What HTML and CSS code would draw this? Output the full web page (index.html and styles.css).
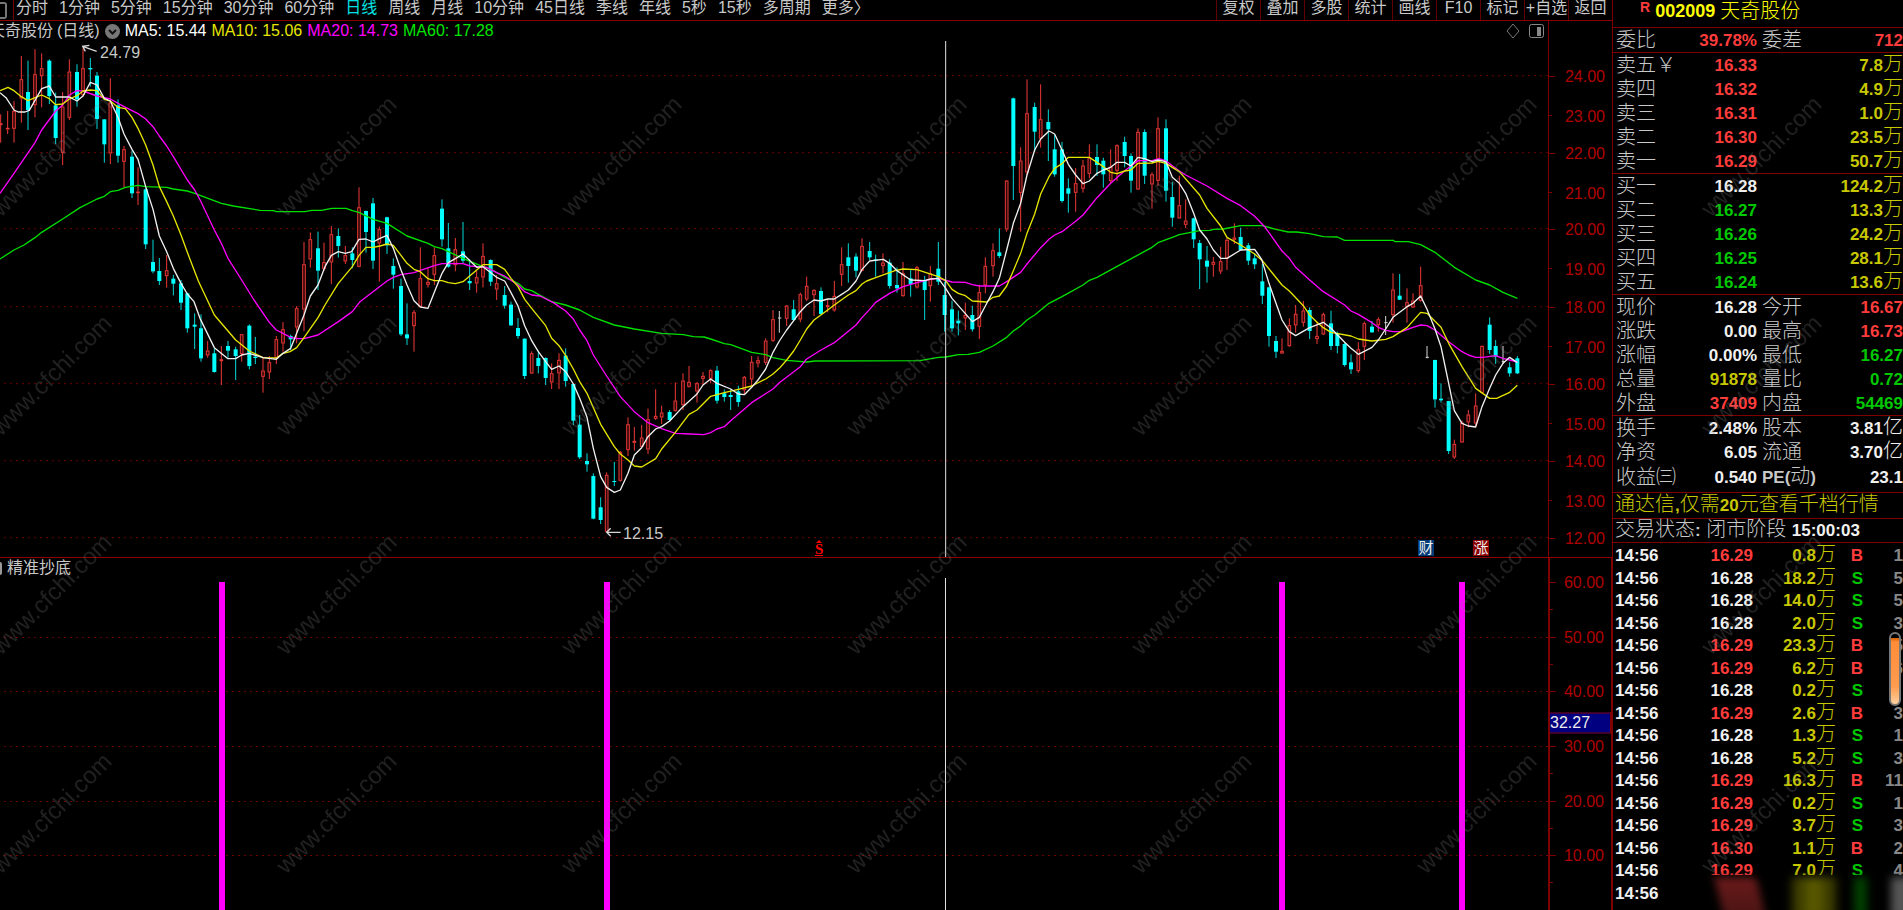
FILE: index.html
```html
<!DOCTYPE html>
<html lang="zh-CN">
<head>
<meta charset="utf-8">
<title>天奇股份 002009</title>
<link rel="stylesheet" href="styles.css">
</head>
<body>
<div class="app">
  <main class="charts">
    <nav class="toolbar">
      <button class="tool-toggle" aria-label="面板"></button>
      <div class="periods">
        <button>分时</button><button>1分钟</button><button>5分钟</button><button>15分钟</button><button>30分钟</button><button>60分钟</button><button class="active">日线</button><button>周线</button><button>月线</button><button>10分钟</button><button>45日线</button><button>季线</button><button>年线</button><button>5秒</button><button>15秒</button><button>多周期</button><button>更多〉</button>
      </div>
      <div class="actions">
        <button>复权</button><button>叠加</button><button>多股</button><button>统计</button><button>画线</button><button>F10</button><button>标记</button><button>+自选</button><button>返回</button>
      </div>
    </nav>

    <header class="chart-head price-head">
      <h1 class="chart-name">天奇股份<span class="period">(日线)</span></h1>
      <svg class="fold" viewBox="0 0 15 15" aria-hidden="true"><circle cx="7.500" cy="7.500" r="7.500" fill="#777"/><path d="M4 6l3.500 3.500L11 6" fill="none" stroke="#111" stroke-width="2"/></svg>
      <span class="ma5">MA5: 15.44</span>
      <span class="ma10">MA10: 15.06</span>
      <span class="ma20">MA20: 14.73</span>
      <span class="ma60">MA60: 17.28</span>
      <svg class="head-icons" viewBox="0 0 40 16" aria-hidden="true"><path d="M8 1l6 7-6 7-6-7z" fill="none" stroke="#777"/><rect x="24.500" y="1.500" width="14" height="13" rx="2" fill="none" stroke="#888"/><rect x="32" y="4" width="4" height="9" fill="#888"/></svg>
    </header>
    <div class="axis-cap"></div>
    <section class="plot" id="price-plot"></section>
    <div class="axis" id="price-axis"></div>

    <div class="split"></div>
    <header class="chart-head signal-head"><i class="ring"></i>精准抄底</header>
    <div class="axis-cap boxed"></div>
    <section class="plot" id="signal-plot"></section>
    <div class="axis boxed" id="signal-axis"></div>
  </main>

  <aside class="quote">
    <header class="stock"><sup class="red">R</sup><b>002009</b><span>天奇股份</span></header>
    <table class="rows info">
      <tr><th>委比</th><td class="red">39.78%</td><th>委差</th><td class="red">712</td></tr>
    </table>
    <table class="rows book">
      <tr><th>卖五￥</th><td class="red">16.33</td><td class="vol">7.8<i>万</i></td></tr>
      <tr><th>卖四</th><td class="red">16.32</td><td class="vol">4.9<i>万</i></td></tr>
      <tr><th>卖三</th><td class="red">16.31</td><td class="vol">1.0<i>万</i></td></tr>
      <tr><th>卖二</th><td class="red">16.30</td><td class="vol">23.5<i>万</i></td></tr>
      <tr><th>卖一</th><td class="red">16.29</td><td class="vol">50.7<i>万</i></td></tr>
    </table>
    <table class="rows book">
      <tr><th>买一</th><td>16.28</td><td class="vol">124.2<i>万</i></td></tr>
      <tr><th>买二</th><td class="green">16.27</td><td class="vol">13.3<i>万</i></td></tr>
      <tr><th>买三</th><td class="green">16.26</td><td class="vol">24.2<i>万</i></td></tr>
      <tr><th>买四</th><td class="green">16.25</td><td class="vol">28.1<i>万</i></td></tr>
      <tr><th>买五</th><td class="green">16.24</td><td class="vol">13.6<i>万</i></td></tr>
    </table>
    <table class="rows info">
      <tr><th>现价</th><td>16.28</td><th>今开</th><td class="red">16.67</td></tr>
      <tr><th>涨跌</th><td>0.00</td><th>最高</th><td class="red">16.73</td></tr>
      <tr><th>涨幅</th><td>0.00%</td><th>最低</th><td class="green">16.27</td></tr>
      <tr><th>总量</th><td class="vol">91878</td><th>量比</th><td class="green">0.72</td></tr>
      <tr><th>外盘</th><td class="red">37409</td><th>内盘</th><td class="green">54469</td></tr>
    </table>
    <table class="rows info basics">
      <tr><th>换手</th><td>2.48%</td><th>股本</th><td>3.81<i>亿</i></td></tr>
      <tr><th>净资</th><td>6.05</td><th>流通</th><td>3.70<i>亿</i></td></tr>
      <tr><th>收益㈢</th><td>0.540</td><th><b>PE(</b>动<b>)</b></th><td>23.1</td></tr>
    </table>
    <a class="promo" href="#">通达信<b>,</b>仅需<b>20</b>元查看千档行情</a>
    <p class="status">交易状态<b>:</b> 闭市阶段 <b>15:00:03</b></p>
    <div class="ticks">
      <table>
        <tr><td>14:56</td><td class="red">16.29</td><td class="vol">0.8<i>万</i></td><td class="red">B</td><td>1</td></tr>
        <tr><td>14:56</td><td>16.28</td><td class="vol">18.2<i>万</i></td><td class="green">S</td><td>5</td></tr>
        <tr><td>14:56</td><td>16.28</td><td class="vol">14.0<i>万</i></td><td class="green">S</td><td>5</td></tr>
        <tr><td>14:56</td><td>16.28</td><td class="vol">2.0<i>万</i></td><td class="green">S</td><td>3</td></tr>
        <tr><td>14:56</td><td class="red">16.29</td><td class="vol">23.3<i>万</i></td><td class="red">B</td><td>5</td></tr>
        <tr><td>14:56</td><td class="red">16.29</td><td class="vol">6.2<i>万</i></td><td class="red">B</td><td>6</td></tr>
        <tr><td>14:56</td><td>16.28</td><td class="vol">0.2<i>万</i></td><td class="green">S</td><td></td></tr>
        <tr><td>14:56</td><td class="red">16.29</td><td class="vol">2.6<i>万</i></td><td class="red">B</td><td>3</td></tr>
        <tr><td>14:56</td><td>16.28</td><td class="vol">1.3<i>万</i></td><td class="green">S</td><td>1</td></tr>
        <tr><td>14:56</td><td>16.28</td><td class="vol">5.2<i>万</i></td><td class="green">S</td><td>3</td></tr>
        <tr><td>14:56</td><td class="red">16.29</td><td class="vol">16.3<i>万</i></td><td class="red">B</td><td>11</td></tr>
        <tr><td>14:56</td><td class="red">16.29</td><td class="vol">0.2<i>万</i></td><td class="green">S</td><td>1</td></tr>
        <tr><td>14:56</td><td class="red">16.29</td><td class="vol">3.7<i>万</i></td><td class="green">S</td><td>3</td></tr>
        <tr><td>14:56</td><td class="red">16.30</td><td class="vol">1.1<i>万</i></td><td class="red">B</td><td>2</td></tr>
        <tr><td>14:56</td><td class="red">16.29</td><td class="vol">7.0<i>万</i></td><td class="green">S</td><td>4</td></tr>
        <tr><td>14:56</td><td></td><td></td><td></td><td></td></tr>
        <tr><td>14:57</td><td></td><td></td><td></td><td></td></tr>
      </table>
      <div class="fade"><i class="smear s-red"></i><i class="smear s-vol"></i><i class="smear s-green"></i><i class="smear s-gray"></i></div>
      <div class="thumb"></div>
    </div>
  </aside>

  <svg class="watermark" aria-hidden="true">
    <defs><pattern id="wm" x="-14" y="77" width="285" height="219" patternUnits="userSpaceOnUse"><text x="0" y="0" transform="translate(15 141) rotate(-45)">www.cfchi.com</text></pattern></defs>
    <rect width="100%" height="100%" fill="url(#wm)"/>
  </svg>
</div>
<script src="chart.js"></script>
</body>
</html>
```
FILE: styles.css
```css
* { box-sizing: border-box; }
body {
  margin: 0;
  background: #000;
  color: #c8c8c8;
  font-family: "Liberation Sans", "Noto Sans CJK SC", sans-serif;
  font-size: 16px;
  line-height: 20px;
  overflow: hidden;
}
button {
  margin: 0;
  padding: 0;
  border: 0;
  background: none;
  color: inherit;
  font: inherit;
  white-space: nowrap;
}
i { font-style: normal; }
.app {
  position: relative;
  display: grid;
  grid-template-columns: minmax(0, 1fr) 291px;
  height: 100vh;
  overflow: hidden;
}
.charts {
  display: grid;
  grid-template-columns: minmax(0, 1fr) 64px;
  grid-template-rows: 21px 20px minmax(0, 516fr) 1px 20px minmax(0, 332fr);
  min-height: 0;
}

/* toolbar */
.toolbar {
  grid-column: 1 / -1;
  display: flex;
  border-bottom: 1px solid #900000;
  line-height: 16px;
}
.tool-toggle {
  width: 14px;
  border-right: 1px solid #700000;
}
.tool-toggle::before {
  content: "";
  display: block;
  width: 5px;
  height: 13px;
  border: 2px solid #777;
  border-left: 0;
  border-radius: 0 3px 3px 0;
}
.periods {
  flex: 1;
  display: flex;
  align-items: flex-start;
  gap: 11px;
  padding-left: 2px;
}
.periods .active { color: #00e0e0; }
.actions { display: flex; }
.actions button {
  width: 44px;
  padding-bottom: 4px;
  border-left: 1px solid #600000;
}

/* chart headings */
.chart-head {
  display: flex;
  align-items: center;
  gap: 5px;
  white-space: nowrap;
}
.chart-name {
  margin: 0 0 0 -11px;
  font-size: 16px;
  font-weight: 400;
}
.period { margin-left: 4px; }
.fold { width: 15px; height: 15px; }
.ma5 { color: #fff; }
.ma10 { color: #e6e600; }
.ma20 { color: #f0f; }
.ma60 { color: #00e600; }
.head-icons {
  width: 40px;
  height: 16px;
  margin-left: auto;
  margin-right: 3px;
}
.ring {
  width: 2px;
  height: 13px;
  border-right: 2px solid #999;
  border-radius: 0 8px 8px 0;
}
.split {
  grid-column: 1 / -1;
  background: #900000;
}

/* plots */
.plot {
  position: relative;
  min-height: 0;
  overflow: hidden;
}
.plot svg {
  display: block;
  width: 100%;
  height: 100%;
}
.grid { stroke: #6a0000; stroke-width: 1; stroke-dasharray: 2 4; }
.up { stroke: #f03838; fill: none; }
.up-body { fill: #300808; stroke: #e83636; stroke-width: 3; }
.down { stroke: #00d8d8; }
.down-body { fill: #0ff; }
.flat { stroke: #d8d8d8; }
.wick { stroke-width: 3; }
.ma { fill: none; stroke-width: 4; stroke-linejoin: round; }
.ma-5 { stroke: #f0f0f0; }
.ma-10 { stroke: #e6e600; }
.ma-20 { stroke: #f0f; }
.ma-60 { stroke: #00e000; }
.pointer { fill: none; stroke: #d8d8d8; stroke-width: 4; }
.cross { stroke: #e0e0e0; stroke-width: 1; }
.signal { fill: #f0f; }
.note {
  position: absolute;
  transform: translateY(-50%);
  line-height: 18px;
}
.mark {
  position: absolute;
  bottom: 1px;
  width: 16px;
  height: 16px;
  color: #eee;
  font-size: 15px;
  line-height: 16px;
  text-align: center;
}
.mark-fin { background: #003a78; }
.mark-rise { background: #8c0000; }
.mark-event {
  color: #f00;
  font: bold 15px/18px "Liberation Serif", serif;
  border-bottom: 1px solid #f00;
  width: 8px;
}
.mark-event::before {
  content: "";
  position: absolute;
  left: 1px;
  top: 0;
  border: 3px solid transparent;
  border-top: 0;
  border-bottom-color: #f00;
}

/* axes */
.axis, .axis-cap { border-left: 1px solid #800000; }
.boxed { border-right: 1px solid #800000; border-left-width: 2px; }
.axis {
  position: relative;
  color: #b00000;
}
.tick {
  position: absolute;
  left: 0;
  width: 3px;
  height: 1px;
  background: #800000;
}
.tick.major { width: 6px; }
.axis-label {
  position: absolute;
  right: 7px;
  transform: translateY(-50%);
}
.axis-value {
  position: absolute;
  left: 0;
  right: 0;
  height: 21px;
  transform: translateY(-50%);
  border: 1px solid #800000;
  border-left: 0;
  background: #000080;
  color: #eee;
  line-height: 18px;
}

/* quote panel */
.quote {
  display: flex;
  flex-direction: column;
  min-height: 0;
  border-left: 1px solid #800000;
  overflow: hidden;
  font-weight: 300;
  font-size: 20px;
}
.quote b { font-weight: 700; }
.red { color: #ff3c3c; }
.green { color: #00c800; }
.stock {
  display: flex;
  flex: none;
  align-items: center;
  height: 27px;
  padding: 0 0 5px 27px;
  color: #ff0;
  line-height: 20px;
}
.stock sup {
  align-self: flex-start;
  margin-right: 5px;
  font-size: 14px;
  font-weight: 700;
  line-height: 14px;
}
.stock b { margin-right: 5px; font-size: 18px; }
.rows {
  flex: none;
  width: 100%;
  border-collapse: separate;
  border-spacing: 0;
  border-top: 1px solid #800000;
  table-layout: fixed;
}
.rows tr { height: 24px; }
.rows th, .rows td {
  padding: 1px 0 0;
  white-space: nowrap;
  line-height: 23px;
}
.rows th {
  width: 60px;
  padding-left: 3px;
  font-weight: 300;
  text-align: left;
}
.rows td {
  color: #f0f0f0;
  font-size: 17px;
  font-weight: 700;
  text-align: right;
}
.rows i, .ticks i {
  font-size: 20px;
  font-weight: 300;
  line-height: 0;
}
.rows b { font-size: 17px; }
.info td:nth-child(2) { width: 84px; }
.info th:nth-child(3) { padding-left: 5px; }
.book td:nth-child(2) { width: 84px; }
.rows .red, .ticks .red { color: #ff3c3c; }
.rows .green, .ticks .green { color: #00c800; }
.rows .vol, .ticks .vol { color: #c8c800; }
.basics { padding-bottom: 3px; }
.promo, .status {
  flex: none;
  margin: 0;
  padding-left: 2px;
  border-top: 1px solid #800000;
  line-height: 23px;
  height: 26px;
  white-space: nowrap;
}
.promo { color: #c8c800; text-decoration: none; }
.promo b, .status b { font-size: 17px; }
.status { height: 24px; line-height: 21px; }
.status b:last-child { color: #f0f0f0; }
.ticks {
  position: relative;
  flex: 1;
  min-height: 0;
  padding-top: 2px;
  border-top: 1px solid #800000;
  overflow: hidden;
}
.ticks table {
  width: 100%;
  height: 383px;
  border-collapse: collapse;
  table-layout: fixed;
}
.ticks td {
  padding: 0;
  color: #f0f0f0;
  font-size: 17px;
  font-weight: 700;
  line-height: 20px;
  text-align: right;
  white-space: nowrap;
}
.ticks td:nth-child(1) { width: 70px; padding-left: 2px; text-align: left; }
.ticks td:nth-child(2) { width: 70px; }
.ticks td:nth-child(3) { width: 83px; }
.ticks td:nth-child(4) { width: 27px; }
.ticks td:nth-child(5) { color: #888; }
.fade {
  position: absolute;
  left: 88px;
  right: 0;
  bottom: 0;
  height: 35px;
  background: #000;
}
.ticks .smear {
  position: absolute;
  top: 2px;
  bottom: -8px;
  filter: blur(4px);
}
.s-red { left: 18px; width: 42px; background: linear-gradient(#6a1a1a, #4a1414); transform: skewX(14deg); }
.s-vol { left: 90px; width: 46px; background: linear-gradient(90deg, #2a2a00, #5e5e00, #2a2a00); }
.s-green { left: 153px; width: 13px; background: #004000; }
.s-gray { left: 190px; width: 20px; background: #555; }
.thumb {
  position: absolute;
  top: 89px;
  right: 2px;
  width: 12px;
  height: 74px;
  border: 2px solid #777;
  border-radius: 6px;
  background: linear-gradient(#000 4px, #d86000 4px, #ff8c38 8px, #ff9c50 75%, #ffd0a0);
}

.watermark {
  position: absolute;
  inset: 0;
  width: 100%;
  height: 100%;
  pointer-events: none;
}
.watermark text {
  fill: #808080;
  fill-opacity: 0.25;
  font: 24px "Liberation Sans", sans-serif;
}
```
FILE: chart.js
```js
// Candle rows: kind, x, high, body top, body bottom, low (plot units, three per pixel at base size).
const candles = `
r 2 343 370 375 428;r 23 333 384 388 402;r 42 303 333 386 428;r 64 168 238 295 368;c 84 182 276 330 390;r 105 148 223 315 352
r 125 160 205 228 322;c 148 178 182 288 312;c 167 278 316 414 432;r 188 276 320 458 495;r 208 178 215 353 360;c 231 193 216 298 320
r 249 145 205 285 290;c 271 174 204 208 260;c 291 216 227 357 387;c 313 358 358 433 488;r 331 235 308 460 492;c 354 298 316 467 488
r 372 438 448 485 562;c 396 452 470 580 594;r 414 502 575 579 615;c 437 565 568 733 747;c 459 719 786 814 820;c 478 774 813 843 855
r 500 765 811 828 863;c 520 825 836 851 886;c 543 840 850 908 930;c 562 878 880 985 998;c 584 940 974 980 1047;c 603 943 985 1075 1085
r 623 1023 1052 1066 1073;c 643 1045 1060 1116 1118;r 664 1038 1078 1083 1155;c 684 1023 1038 1052 1073;c 707 1040 1048 1068 1140
r 725 1002 1003 1062 1085;c 748 973 977 1098 1108;c 766 1011 1070 1074 1092;r 789 1072 1112 1130 1178;r 808 1068 1087 1117 1137
r 829 1008 1018 1075 1092;r 849 966 988 1030 1055;c 872 1004 1008 1018 1050;r 890 918 925 982 1030;r 912 726 793 928 993
r 931 697 718 778 803;c 954 695 745 812 870;r 972 728 787 806 812;r 994 678 703 787 852;c 1015 685 708 738 773;r 1036 738 766 784 792
c 1057 742 760 780 805;r 1077 562 622 800 802;c 1098 632 633 696 758;c 1119 594 610 782 807;r 1138 680 688 730 845;c 1161 650 652 736 762
c 1180 775 798 824 866;c 1203 836 858 1003 1008;c 1221 910 1003 1015 1035;r 1242 930 937 978 1055;r 1261 742 835 920 922
r 1284 805 846 854 863;r 1303 742 766 824 855;c 1326 598 626 718 740;c 1345 669 745 800 803;r 1366 714 748 795 814;c 1389 666 754 782 790
c 1409 778 843 850 870;r 1430 812 832 850 878;r 1449 730 768 832 862;c 1472 778 780 845 858;r 1490 825 850 868 900;c 1514 858 885 917 926
c 1533 905 914 976 978;c 1554 954 984 1008 1016;c 1574 1015 1016 1128 1137;r 1595 1054 1060 1120 1122;c 1615 1052 1074 1098 1120
c 1637 1072 1074 1134 1155;r 1655 1090 1120 1147 1167;r 1677 1060 1080 1120 1167;c 1697 1045 1067 1143 1160;c 1720 1150 1152 1262 1275
c 1739 1245 1274 1372 1377;c 1761 1360 1383 1393 1415;c 1780 1420 1428 1556 1558;c 1802 1492 1522 1560 1572;r 1820 1417 1425 1595 1597
c 1843 1386 1443 1446 1458;r 1861 1353 1356 1442 1445;r 1884 1252 1273 1350 1368;r 1903 1281 1323 1328 1352;r 1925 1275 1313 1340 1343
r 1944 1226 1258 1348 1362;r 1967 1168 1248 1256 1260;r 1985 1217 1238 1252 1272;c 2009 1230 1236 1260 1265;r 2026 1147 1202 1232 1235
r 2049 1120 1142 1215 1230;r 2067 1098 1146 1160 1163;r 2091 1146 1150 1174 1208;r 2109 1116 1128 1136 1155;r 2132 1108 1111 1136 1150
c 2151 1098 1112 1202 1211;c 2173 1168 1180 1191 1205;c 2192 1168 1185 1191 1230;c 2215 1157 1174 1206 1220;r 2233 1128 1131 1170 1185
r 2255 1068 1086 1138 1158;r 2274 1069 1081 1090 1102;r 2297 1015 1022 1088 1095;r 2319 930 958 1022 1026;w 2338 933 953 956 998
r 2360 915 917 956 978;c 2381 900 928 960 964;r 2401 878 883 958 967;r 2420 830 858 898 903;r 2442 868 870 885 948;c 2463 862 873 942 944
r 2483 900 916 921 937;r 2503 843 888 931 935;r 2525 742 793 824 858;c 2545 730 772 798 848;c 2568 760 770 812 832;r 2586 715 738 812 814
c 2609 726 753 772 780;c 2627 764 778 781 830;r 2649 760 788 798 820;c 2669 778 788 858 866;c 2691 802 855 865 878;r 2709 786 820 888 890
c 2732 810 835 852 890;r 2751 798 802 862 866;c 2774 828 842 870 960;r 2791 798 820 858 905;c 2815 726 806 845 855;c 2834 845 885 945 995
c 2856 902 928 985 995;c 2875 932 962 970 1006;r 2896 908 945 955 990;c 2917 917 945 988 995;r 2938 854 877 980 1017;r 2956 772 798 856 880
r 2979 730 751 798 830;c 2998 685 757 768 774;r 3020 540 542 688 695;c 3040 293 295 498 600;r 3062 442 482 578 695;r 3081 238 340 517 525
c 3104 308 321 395 455;r 3122 253 358 416 443;c 3145 328 366 388 483;c 3164 405 448 523 530;c 3186 426 448 603 608;c 3205 535 565 581 638
r 3227 504 550 578 635;r 3249 480 497 566 578;r 3268 433 473 521 535;c 3291 433 471 495 528;c 3310 473 482 523 563;r 3332 448 500 543 550
r 3351 433 436 512 543;c 3374 410 426 468 502;c 3393 460 468 542 578;r 3414 385 396 568 570;c 3434 388 396 527 552;r 3456 517 523 553 626
r 3474 352 385 542 558;c 3498 358 385 572 605;c 3517 546 591 653 680;r 3538 527 616 655 656;r 3557 598 662 674 684;c 3581 653 655 718 744
c 3599 720 729 778 867;c 3621 738 782 800 848;r 3640 771 786 794 830;r 3662 741 784 814 822;r 3681 714 720 775 810;r 3703 670 713 719 732
c 3722 683 711 750 752;c 3745 729 736 782 795;c 3764 760 775 793 807;c 3787 792 844 887 912;c 3807 860 862 1008 1040;c 3828 1008 1023 1055 1074
r 3846 1015 1053 1060 1062;r 3868 955 976 1038 1040;r 3887 915 942 976 998;r 3910 903 932 968 980;c 3929 922 930 993 1017;r 3951 965 1008 1017 1032
r 3970 938 943 1003 1005;c 3993 932 970 1038 1050;c 4012 995 1002 1038 1060;c 4034 1028 1032 1095 1100;c 4053 1063 1087 1108 1122
r 4075 1027 1048 1113 1118;r 4093 965 970 1040 1080;c 4116 963 980 997 998;r 4135 952 958 975 995;w 4157 948 967 969 1005;r 4179 820 869 945 968
c 4199 822 887 899 900;r 4221 865 907 920 968;r 4239 880 902 922 924;r 4262 800 856 902 905;w 4281 1038 1071 1074 1075;c 4305 1079 1080 1198 1223
c 4323 1150 1196 1201 1208;c 4346 1203 1203 1353 1362;r 4363 1319 1332 1372 1377;r 4386 1262 1268 1327 1328;r 4405 1230 1244 1267 1282
r 4427 1180 1217 1270 1280;r 4446 1037 1038 1178 1180;c 4469 952 974 1050 1062;c 4487 1020 1038 1070 1092;w 4509 1038 1084 1087 1092
c 4529 1087 1102 1120 1130;c 4552 1068 1075 1120 1122`;

const averages = {
  60: "0,777 42,750 72,735 105,713 125,697 188,657 240,623 291,597 313,589 331,575 354,571 376,562 414,556 437,560 500,562 520,567 562,573 584,580 664,610 700,618 780,631 820,632 830,635 915,635 935,631 965,631 995,625 1038,625 1057,632 1077,637 1119,658 1161,670 1221,708 1284,730 1303,740 1326,746 1388,775 1449,800 1472,807 1514,832 1554,850 1574,867 1595,872 1615,883 1655,905 1697,915 1739,930 1780,952 1843,975 1903,987 1985,1000 2050,1004 2080,1010 2112,1011 2132,1017 2173,1031 2192,1034 2255,1057 2297,1064 2319,1073 2360,1081 2420,1086 2445,1083 2760,1082 2815,1072 2837,1071 2875,1064 2905,1063 2938,1057 2979,1038 3020,1012 3040,993 3062,978 3081,960 3104,945 3147,910 3186,890 3249,855 3268,841 3291,832 3456,742 3474,728 3517,712 3538,704 3599,692 3630,691 3640,688 3670,687 3722,677 3787,677 3828,688 3865,696 3890,696 3929,701 3970,710 4012,711 4034,721 4180,721 4185,725 4225,725 4262,734 4305,757 4363,802 4427,840 4469,855 4509,877 4552,895",
  20: "0,580 42,520 105,428 125,390 167,333 188,315 208,285 231,272 249,273 291,288 331,297 372,320 414,341 437,357 459,380 478,408 500,438 520,470 562,540 584,570 603,605 643,690 664,730 684,775 725,840 762,900 808,967 829,990 849,1000 872,1012 890,1016 912,1016 954,1005 1015,965 1057,935 1080,905 1119,875 1161,843 1180,832 1203,824 1242,818 1303,797 1326,791 1389,791 1410,798 1460,802 1490,818 1514,828 1554,855 1574,875 1595,885 1620,888 1660,908 1697,933 1720,957 1739,990 1761,1022 1780,1065 1820,1128 1861,1190 1903,1235 1944,1268 1985,1286 2026,1300 2070,1302 2112,1304 2132,1298 2151,1287 2173,1280 2192,1262 2255,1208 2319,1167 2338,1148 2401,1100 2420,1077 2463,1050 2503,1028 2568,975 2586,953 2609,928 2627,907 2650,892 2669,880 2709,860 2751,848 2791,838 2815,835 2856,846 2896,847 2917,854 2938,858 2998,858 3020,845 3062,817 3081,792 3122,743 3147,718 3164,705 3186,695 3227,664 3249,645 3291,593 3332,550 3374,512 3414,482 3456,482 3477,476 3498,483 3538,513 3557,525 3621,558 3681,595 3722,617 3764,649 3794,680 3846,753 3868,775 3887,802 3929,840 3970,875 4034,915 4053,933 4075,943 4116,968 4135,982 4157,991 4179,995 4205,995 4239,982 4262,975 4281,977 4305,990 4346,1025 4386,1055 4405,1065 4427,1072 4450,1072 4487,1067 4509,1075 4529,1080 4552,1086",
  10: "0,272 24,262 42,272 64,290 84,302 105,293 125,285 148,296 167,314 188,312 208,297 231,287 249,273 271,270 291,272 313,298 331,303 354,322 376,326 396,352 414,385 437,435 459,495 478,560 500,605 520,648 543,705 562,757 595,843 643,945 707,1020 748,1053 789,1073 829,1074 849,1060 870,1055 890,1043 912,1013 954,953 975,915 1015,850 1057,800 1077,766 1098,742 1119,742 1140,738 1161,732 1180,736 1221,790 1242,808 1261,815 1284,836 1303,842 1326,842 1345,848 1366,851 1389,845 1430,810 1449,794 1490,794 1514,808 1533,835 1554,860 1574,898 1595,925 1637,977 1655,1015 1677,1037 1697,1067 1720,1107 1739,1145 1761,1180 1802,1273 1843,1340 1861,1362 1884,1380 1903,1398 1925,1401 1967,1376 1985,1347 2026,1297 2067,1243 2091,1230 2132,1189 2173,1178 2215,1168 2255,1158 2297,1137 2319,1122 2338,1105 2360,1080 2381,1053 2401,1020 2420,987 2442,960 2483,930 2503,915 2545,885 2568,872 2586,852 2600,843 2627,833 2685,812 2709,807 2751,809 2815,830 2837,842 2856,868 2875,880 2896,887 2917,903 2960,906 2979,892 2998,888 3020,858 3040,812 3062,760 3081,700 3104,642 3122,582 3147,530 3164,505 3186,491 3205,472 3268,472 3291,487 3310,500 3332,517 3351,521 3374,513 3393,510 3414,490 3456,489 3474,484 3498,490 3517,502 3538,515 3599,585 3621,625 3662,678 3681,712 3722,735 3764,762 3787,782 3846,855 3868,873 3910,917 3929,945 3951,967 3970,983 3993,997 4053,1008 4075,1017 4116,1023 4157,1018 4179,1010 4221,983 4262,937 4281,940 4323,982 4346,1030 4386,1100 4427,1165 4469,1195 4490,1195 4529,1177 4552,1156",
  5: "0,278 18,293 42,330 55,336 75,336 88,331 125,266 148,258 167,291 208,291 231,303 249,288 271,247 291,255 313,295 331,303 354,352 372,402 396,448 414,478 437,560 459,628 478,708 500,755 520,805 543,850 562,882 582,905 600,955 643,1043 684,1076 707,1076 725,1065 748,1060 789,1073 829,1078 849,1060 872,1045 890,1000 912,945 931,888 954,855 975,800 994,766 1015,755 1036,760 1055,755 1077,718 1098,717 1119,726 1140,715 1161,706 1180,745 1203,810 1221,855 1242,902 1261,921 1284,925 1303,877 1326,820 1345,788 1366,776 1389,762 1430,802 1449,800 1490,832 1514,843 1533,878 1554,918 1574,977 1595,1022 1615,1055 1637,1085 1655,1108 1677,1098 1697,1115 1720,1152 1739,1195 1761,1252 1780,1345 1802,1430 1820,1462 1843,1477 1861,1470 1884,1420 1903,1365 1925,1343 1944,1310 1967,1287 1985,1280 2009,1263 2049,1220 2091,1182 2109,1155 2132,1137 2151,1150 2192,1167 2215,1182 2233,1184 2255,1162 2274,1140 2297,1107 2319,1057 2338,1023 2360,990 2381,962 2401,935 2420,915 2442,900 2463,903 2483,897 2503,897 2525,883 2545,870 2568,843 2586,808 2609,783 2650,778 2669,790 2691,812 2732,840 2774,842 2791,837 2815,835 2837,865 2856,895 2917,965 2938,952 2956,918 2979,875 2998,835 3020,750 3040,670 3062,610 3081,525 3104,450 3122,417 3147,393 3164,402 3186,450 3205,493 3227,525 3249,551 3268,543 3291,520 3310,510 3332,502 3351,487 3374,487 3393,498 3414,472 3434,476 3456,485 3474,480 3498,485 3517,532 3538,550 3557,580 3581,640 3599,690 3621,717 3640,750 3662,775 3681,775 3722,750 3764,748 3785,778 3807,850 3828,910 3846,960 3868,995 3887,1007 3929,983 3970,967 3993,985 4034,1027 4053,1045 4075,1063 4116,1042 4135,1020 4157,987 4179,952 4221,920 4239,910 4262,888 4281,928 4305,987 4323,1040 4346,1150 4363,1232 4386,1270 4405,1278 4427,1281 4446,1220 4469,1165 4487,1125 4509,1090 4529,1072 4552,1088"
};

const W = 1548, PRICE_H = 516, SIGNAL_H = 332;
const line = (cls, x1, y1, x2, y2, extra = "") =>
  `<line class="${cls}" x1="${x1}" y1="${y1}" x2="${x2}" y2="${y2}" ${extra}/>`;
const pct = (v, total) => (v / total * 100).toFixed(3) + "%";
const FIXED = 'vector-effect="non-scaling-stroke"';

function candle(row) {
  const [kind, ...n] = row.trim().split(" ");
  const [x, hi, top, bottom, lo] = n.map(Number);
  const h = Math.max(3, bottom - top);
  if (kind === "r") {
    return line("up wick", x, hi, x, top) + line("up wick", x, bottom, x, lo) +
      `<rect class="up-body" x="${x - 4}" y="${top + 1}" width="8" height="${Math.max(1, h - 2)}"/>`;
  }
  if (kind === "c") {
    return line("down wick", x, hi, x, lo) + `<rect class="down-body" x="${x - 6}" y="${top}" width="12" height="${h}"/>`;
  }
  return line("flat wick", x, hi, x, lo) + line("flat wick", x - 4, top + 1, x + 6, top + 1);
}

function drawPrice() {
  const rows = [35, 112, 188, 266, 343, 420, 497];
  let s = `<svg viewBox="0 123 ${W * 3} ${PRICE_H * 3}" preserveAspectRatio="none">`;
  for (const y of rows) s += line("grid", 12, (y + 41) * 3 - 1, W * 3, (y + 41) * 3 - 1, FIXED);
  s += candles.trim().split(/[;\n]/).map(candle).join("");
  for (const k of [60, 20, 10, 5]) s += `<polyline class="ma ma-${k}" points="${averages[k]}"/>`;
  s += '<path class="pointer" d="M290 154L250 140M268 136L248 139L256 154"/>';
  s += '<path class="pointer" d="M1862 1597H1820M1832 1585L1820 1597L1832 1609"/>';
  s += line("cross", 2837, 123, 2837, 1671, FIXED) + "</svg>";
  const note = (x, y, t) => `<span class="note" style="left:${pct(x, W)};top:${pct(y, PRICE_H)}">${t}</span>`;
  const mark = (x, cls, t) => `<span class="mark ${cls}" style="left:${pct(x, W)}">${t}</span>`;
  s += note(100, 12, "24.79") + note(623, 493, "12.15");
  s += mark(815, "mark-event", "S") + mark(1418, "mark-fin", "财") + mark(1473, "mark-rise", "涨");
  document.getElementById("price-plot").innerHTML = s;

  const ys = [35, 74, 112, 151, 188, 227, 266, 305, 343, 382, 420, 459, 497];
  document.getElementById("price-axis").innerHTML = ys.map((y, i) =>
    `<i class="tick ${i % 2 ? "" : "major"}" style="top:${pct(y, PRICE_H)}"></i>` +
    `<span class="axis-label" style="top:${pct(y + 1 + i % 2, PRICE_H)}">${24 - i}.00</span>`).join("");
}

function drawSignal() {
  const ys = [4, 59, 113, 168, 223, 277];
  let s = `<svg viewBox="0 0 ${W} ${SIGNAL_H}" preserveAspectRatio="none">`;
  for (const y of ys.slice(1)) s += line("grid", 4, y + 0.5, W, y + 0.5, FIXED);
  for (const x of [219, 604, 1279, 1459]) s += `<rect class="signal" x="${x}" y="4" width="6" height="${SIGNAL_H}"/>`;
  s += line("cross", 945.5, 0, 945.5, SIGNAL_H, FIXED) + "</svg>";
  document.getElementById("signal-plot").innerHTML = s;

  let a = ys.map((y, i) =>
    `<i class="tick major" style="top:${pct(y, SIGNAL_H)}"></i>` +
    `<i class="tick" style="top:${pct(y + 27, SIGNAL_H)}"></i>` +
    `<span class="axis-label" style="top:${pct(y + 1, SIGNAL_H)}">${60 - i * 10}.00</span>`).join("");
  a += `<span class="axis-value" style="top:${pct(145, SIGNAL_H)}">32.27</span>`;
  document.getElementById("signal-axis").innerHTML = a;
}

drawPrice();
drawSignal();
```
